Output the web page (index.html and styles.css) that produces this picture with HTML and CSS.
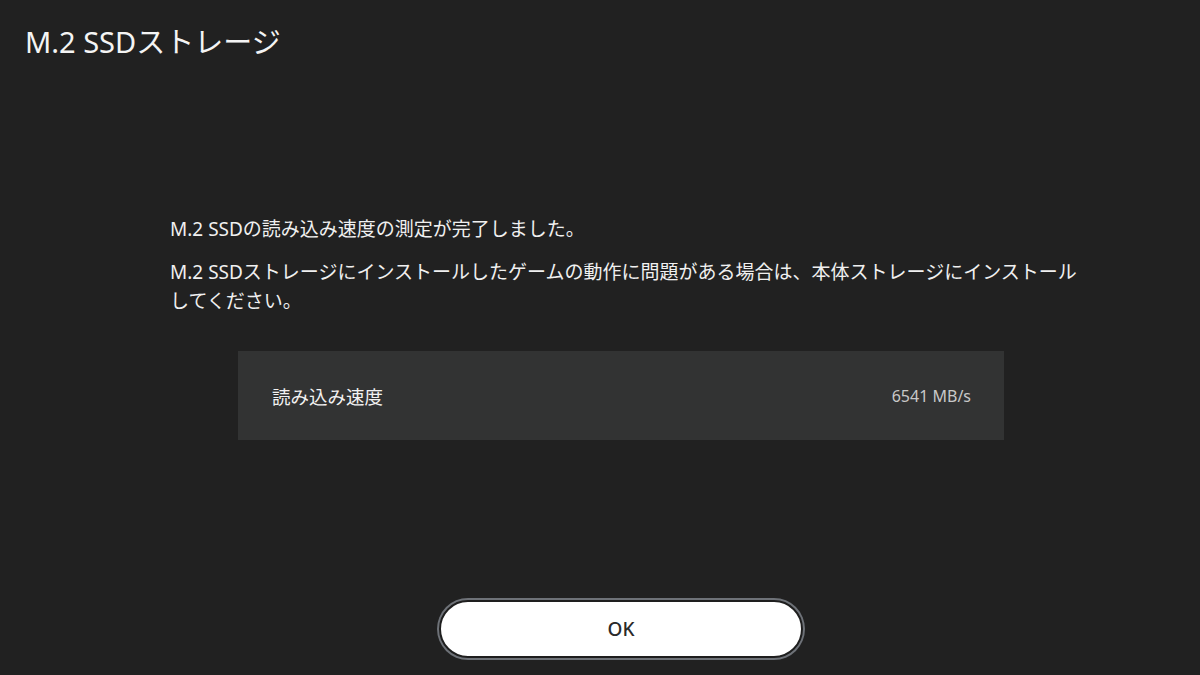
FILE: index.html
```html
<!DOCTYPE html>
<html lang="ja">
<head>
<meta charset="utf-8">
<link rel="stylesheet" href="styles.css">
</head>
<body>
<div class="screen">
  <h1 class="title">M.2 SSDストレージ</h1>
  <div class="content">
    <p class="msg">M.2 SSDの読み込み速度の測定が完了しました。</p>
    <p class="msg">M.2 SSDストレージにインストールしたゲームの動作に問題がある場合は、本体ストレージにインストールしてください。</p>
    <div class="panel">
      <span class="label">読み込み速度</span>
      <span class="value">6541 MB/s</span>
    </div>
  </div>
  <div class="actions">
    <button class="ok">OK</button>
  </div>
</div>
</body>
</html>
```
FILE: styles.css
```css
html, body {
  margin: 0;
  padding: 0;
  background: #212121;
}
body {
  font-family: "Noto Sans", "Noto Sans CJK JP", sans-serif;
  color: #f2f2f2;
}
.screen {
  width: 1200px;
  height: 675px;
  display: flex;
  flex-direction: column;
  box-sizing: border-box;
}
.title {
  margin: 0;
  padding: 22px 0 0 25px;
  font-size: 29px;
  font-weight: 400;
  line-height: 40px;
  color: #f4f4f4;
}
.content {
  margin: 153px 0 0 170px;
  width: 910px;
  display: flex;
  flex-direction: column;
}
.msg {
  margin: 0 0 14px 0;
  font-size: 19px;
  line-height: 29px;
  color: #f0f0f0;
}
.panel {
  margin: 21px 0 0 68px;
  width: 766px;
  height: 89px;
  background: #323333;
  display: flex;
  align-items: center;
  justify-content: space-between;
  padding: 0 33px 0 34px;
  box-sizing: border-box;
}
.label {
  font-size: 18.5px;
  color: #f2f2f2;
}
.value {
  font-size: 16px;
  color: #c8c8c8;
}
.actions {
  margin-top: auto;
  padding-bottom: 17px;
  display: flex;
  justify-content: center;
  padding-left: 42px;
}
.ok {
  width: 364px;
  height: 58px;
  border-radius: 29px;
  background: #ffffff;
  border: 2px solid #1e1e1e;
  box-shadow: 0 0 0 2px #6e7278;
  font-family: "Noto Sans", sans-serif;
  font-size: 19px;
  font-weight: 500;
  color: #2a2a2a;
  cursor: pointer;
}
```
